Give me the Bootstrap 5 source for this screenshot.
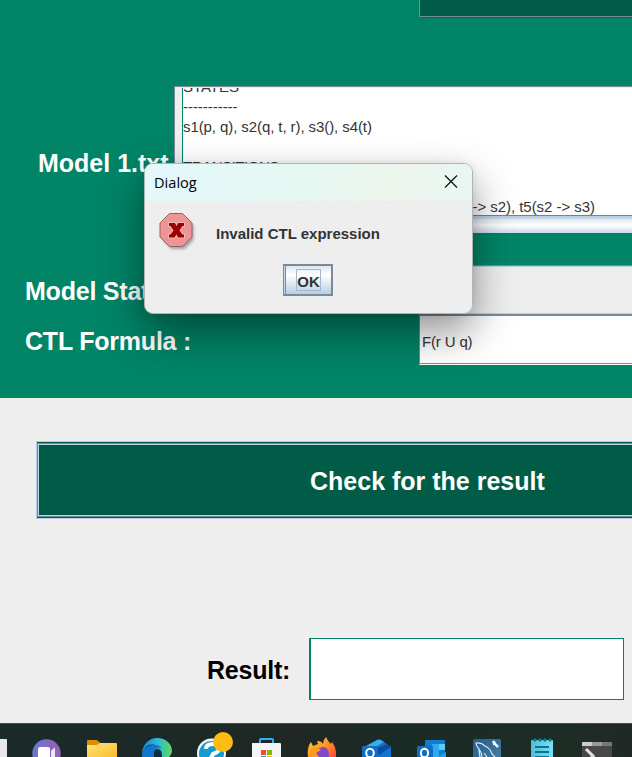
<!DOCTYPE html>
<html lang="en">
<head>
<meta charset="utf-8">
<title>CTL Model Checker</title>
<meta name="viewport" content="width=device-width, initial-scale=1">
<link href="https://cdn.jsdelivr.net/npm/bootstrap@5.3.0/dist/css/bootstrap.min.css" rel="stylesheet">
<style>
body{font-family:"Liberation Sans",Arial,sans-serif;background:#eee;width:632px;height:757px;color:#333}
.form-panel{background:#008466;height:398px}
.top-button{height:18px;margin-left:419px;background:#005c46;border-left:1px solid #7a8a99;border-bottom:1px solid #1d5a50;box-shadow:inset 0 -1px #7a8a99}
.field-label{font-size:25px;font-weight:700;color:#fff;line-height:30px;white-space:nowrap}
.model-row{height:147px;margin-top:68px}
.model-name{width:174px;padding-left:38px;padding-top:6px}
.model-view{border-top:1px solid #7a8a99;border-left:1px solid #7a8a99;background:#eee;padding:1px 0 0 7px}
.model-text{height:127px;background:#fff;border-left:1px solid #008466;font-size:15px;line-height:20px;color:#333;overflow:hidden;white-space:nowrap}
.model-lines{margin-top:-11px;letter-spacing:-.04px}
.line-states{letter-spacing:-.085px}
.line-heading{letter-spacing:-.45px}
.scroll-track{height:18px;margin-left:-7px;border-top:1px solid #6382bf;background:linear-gradient(#b8cfe5 0 2px,#dce5ee 3px,#fff 9px,#cbdbea 17px)}
.state-row{height:51px;margin-top:32px}
.caption-col{width:419px;padding-left:25px;letter-spacing:-.22px}
.state-combo{background:#eee;border-top:1px solid #7a8a99;border-bottom:2px solid #7a8a99;box-shadow:inset 0 1px #b8cfe5,inset 0 -1px #b8cfe5}
.formula-row{height:49px}
.formula-input{background:#fff;border-left:1px solid #7a8a99;border-bottom:1px solid #fff;box-shadow:inset 0 -1px #7a8a99;font-size:15px;letter-spacing:-.15px;padding:5px 0 0 2px}
.check-button{margin:43px 0 0 36px;height:78px;padding:0;background:#005c46;border:1px solid #b8cfe5;border-right:0;border-radius:0;color:#fff;font-size:25px;font-weight:700;text-align:left}
.check-inner{height:74px;border:1px solid #7a8a99;border-right:0;width:100%;box-shadow:inset 1px 1px #b8cfe5,inset 0 -1px #b8cfe5;padding:3px 0 0 272px}
.result-row{margin-top:119px;height:63px;padding-left:207px}
.result-label{width:102px;color:#000;padding-top:1px;letter-spacing:-.22px}
.result-field{width:315px;height:62px;background:#fff;border:1px solid #008466;border-left-width:2px;border-radius:0}
.task-strip{margin-top:22px;height:34px;background:linear-gradient(90deg,#192b29,#202724 47%,#192c25 65%,#1e2c26 90%,#202925);border-top:1px solid #465049;overflow:hidden}
.task-strip svg{display:block}
.message-box{position:absolute;left:144px;top:163px;width:329px;height:151px;background:#eee;border:1px solid #aeb5b2;border-radius:9px;overflow:hidden}
.box-shade{position:absolute;left:144px;top:163px;width:329px;height:151px;border-radius:9px;box-shadow:0 18px 42px rgba(0,0,0,.43),0 0 8px rgba(0,0,0,.08)}
.title-strip{height:37px;background:linear-gradient(115deg,#e3f8fb,#e6f8f2 50%,#edf5ec 75%,#e8f6f3);padding:0 14px 0 9px;color:#000;font:14.6px "Open Sans","Noto Sans",sans-serif}
.title-text{margin-top:-2px}
.message-text{font-size:15px;font-weight:700;color:#333;margin:7px 0 0 19px;white-space:nowrap}
.message-line{height:59px;padding-left:12px}
.ok-button{width:50px;height:32px;margin-right:1px;padding:0 0 0 2px;border:2px solid #7a8a99;border-left-width:1px;border-radius:0;box-shadow:inset 1px 0 #c5d7e6,inset 2px 0 #7a8a99;background:linear-gradient(#dce7f1,#fff 32%,#b8cfe5);font-size:15px;font-weight:700;color:#333}
.ok-focus{display:block;width:25px;height:22px;border:1px solid #a3b8cc;line-height:24px}
</style>
</head>
<body class="m-0 overflow-hidden position-relative">
<main>
<section class="form-panel overflow-hidden">
  <div class="top-button"></div>
  <div class="model-row d-flex">
    <div class="model-name field-label d-flex align-items-center flex-shrink-0">Model 1.txt</div>
    <div class="model-view flex-grow-1 overflow-hidden">
      <div class="model-text">
        <div class="model-lines d-flex flex-column">
          <div>STATES</div>
          <div>-----------</div>
          <div class="line-states">s1(p, q), s2(q, t, r), s3(), s4(t)</div>
          <div>&nbsp;</div>
          <div class="line-heading">TRANSITIONS</div>
          <div>----------------</div>
          <div>t1(s1 -&gt; s2), t2(s1 -&gt; s3), t3(s3 -&gt; s4), t4(s4 -&gt; s2), t5(s2 -&gt; s3)</div>
        </div>
      </div>
      <div class="scroll-track"></div>
    </div>
  </div>
  <div class="state-row d-flex">
    <div class="caption-col field-label d-flex align-items-center flex-shrink-0">Model States :</div>
    <div class="state-combo flex-grow-1"></div>
  </div>
  <div class="formula-row d-flex">
    <div class="caption-col field-label d-flex align-items-center flex-shrink-0">CTL Formula :</div>
    <div class="formula-input flex-grow-1 d-flex align-items-center">F(r U q)</div>
  </div>
</section>
<section class="d-flex flex-column">
  <button class="check-button btn d-flex align-items-center"><span class="check-inner d-flex align-items-center">Check for the result</span></button>
  <div class="result-row d-flex">
    <label class="result-label field-label d-flex align-items-center" for="result">Result:</label>
    <input id="result" class="result-field" type="text" readonly>
  </div>
</section>
</main>
<footer class="task-strip">
<svg width="632" height="33" viewBox="0 724 632 33">
  <defs>
    <linearGradient id="chat" x2="1"><stop stop-color="#6878ce"/><stop offset="1" stop-color="#9860b8"/></linearGradient>
    <linearGradient id="folder" x2="1" y2="1"><stop stop-color="#ffe27b"/><stop offset="1" stop-color="#f9bd2c"/></linearGradient>
    <linearGradient id="edge" x2="1"><stop stop-color="#1682d9"/><stop offset=".5" stop-color="#27b9df"/><stop offset="1" stop-color="#62d957"/></linearGradient>
    <linearGradient id="fox" y2="1"><stop stop-color="#ffdc3b"/><stop offset=".5" stop-color="#ff9822"/><stop offset="1" stop-color="#ff4540"/></linearGradient>
    <linearGradient id="db" y2="1"><stop stop-color="#245d87"/><stop offset="1" stop-color="#477fa9"/></linearGradient>
    <linearGradient id="note" x2="1"><stop stop-color="#55bdd8"/><stop offset="1" stop-color="#76e0f5"/></linearGradient>
  </defs>
  <path fill="#e9e9e9" d="M0 739h6q1 0 1 1v18H0z"/>
  <circle cx="46.500" cy="753.500" r="14.200" fill="url(#chat)"/>
  <rect x="38" y="747" width="12" height="14" rx="2" fill="#fff"/><path fill="#eee8ff" d="M51 751l3-3q1-1 1 1v9h-4z"/>
  <path fill="#d99000" d="M87 741q0-1 1-1h8q2 0 3 2l2 1h5v6H87z"/>
  <path fill="url(#folder)" d="M87 745h9q2 0 4-2h16q1 0 1 1v14H87z"/>
  <path fill="url(#edge)" d="M142 757c-1-11 6-19 15-19 9 0 15 6 15 13q0 4-4 7h-8l-5-13c-7-2-11 2-13 12z"/>
  <path fill="#1277cb" d="M142 757q2-11 9-12 7-1 11 3-7-1-8 5v4z"/><path fill="#112d42" d="M154 757q-1-7 4-8 4 0 4 8z"/>
  <circle cx="211.500" cy="753" r="14.500" fill="#eef7fa"/><circle cx="211.500" cy="753.500" r="12.500" fill="#139bd3"/>
  <path fill="none" stroke="#fff" stroke-width="4" d="M206 749q0-5 7-5 7 0 6 5 0 3-6 5l-2 4"/>
  <circle cx="223" cy="742" r="10" fill="#ffbc13"/>
  <path fill="none" stroke="#35aef3" stroke-width="2" d="M260 744v-4q0-1 1-1h11q1 0 1 1v4"/>
  <path fill="#f5f5f5" d="M252 743h28q1 0 1 1v14h-29z"/>
  <path fill="#f35023" d="M261 750h5v5h-5z"/><path fill="#81bb0a" d="M267 750h5v5h-5z"/><path fill="#159ddd" d="M261 756h5v2h-5z"/><path fill="#febc09" d="M267 756h5v2h-5z"/>
  <path fill="url(#fox)" d="M308 757c-1-7 1-13 3-15l2 4 5-2-1-3q5 0 6 3 0-4 3-7 2 5 5 7l1-2q5 7 4 15z"/>
  <path fill="#8148cc" d="M316 757c0-8 4-10 8-10q5 1 5 10z"/><path fill="#ff9827" d="M311 749q5-3 10 1l-5 3 3 4h-9z"/>
  <path fill="#1174cd" d="M366 747l11-7q2-1 4 0l10 7v11h-25z"/><path fill="#37aef0" d="M366 746l11-6q2-1 4 0l3 2-14 8z"/><path fill="#0c4ca4" d="M375 749l12-5 4 3-12 8z"/>
  <rect x="362" y="746" width="16" height="15" rx="1" fill="#126dc4"/><ellipse cx="370" cy="753" rx="3.800" ry="4.300" fill="none" stroke="#fff" stroke-width="2"/>
  <path fill="#137bd0" d="M425 741q0-1 1-1h18q1 0 1 1v17h-20z"/><path fill="#31aaf0" d="M432 744h7v13h-7z"/><path fill="#56cdf7" d="M439 744h6v6h-6z"/><path fill="#239de6" d="M437 757l9-5v5z"/>
  <rect x="417" y="746" width="16" height="15" rx="1" fill="#126dc4"/><ellipse cx="424.500" cy="753" rx="3.600" ry="4.300" fill="none" stroke="#fff" stroke-width="2"/>
  <rect x="473" y="739" width="28" height="25" rx="1.500" fill="url(#db)"/>
  <path fill="none" stroke="#d9e9f2" stroke-width="1.200" d="M480 757q-1-5-1-8-3-3-3-6 5-1 9 3 5 2 7 8l3 3M479 749q3 4 3 8m2-4 3 4"/><path fill="none" stroke="#edf5f8" stroke-width="2.500" d="M493 741l2 3 3 3m-5-3 3-1"/>
  <rect x="531" y="740" width="22" height="20" rx="1" fill="url(#note)"/>
  <path fill="none" stroke="#087593" stroke-width="2" d="M535 747h14m-14 5h14m-14 5h14"/>
  <g fill="#14758f"><circle cx="535" cy="740" r="1.700"/><circle cx="540" cy="740" r="1.700"/><circle cx="545" cy="740" r="1.700"/><circle cx="550" cy="740" r="1.700"/></g>
  <path fill="#484848" d="M582 743h30v15h-30z"/><path fill="#ccc" d="M582 743q0-1 1-1h9v4h-10z"/><path fill="#999" d="M592 742h10v4h-10z"/><path fill="#777" d="M602 742h9q1 0 1 1v3h-10z"/>
  <path fill="none" stroke="#e2e2e2" stroke-width="3" d="M586 749l7 7-2 2"/>
</svg>
</footer>
<div class="box-shade"></div>
<div class="message-box" role="dialog" aria-label="Dialog">
  <div class="title-strip d-flex align-items-center justify-content-between">
    <span class="title-text">Dialog</span>
    <svg width="14" height="14" viewBox="0 0 14 14" class="mb-1"><path d="M1 1.500l12 12M13 1.500l-12 12" stroke="#111" stroke-width="1.200"/></svg>
  </div>
  <div class="message-line d-flex align-items-center">
    <svg width="40" height="42" viewBox="157 210 40 42" class="flex-shrink-0">
      <defs><filter id="soft"><feGaussianBlur stdDeviation="1.500"/></filter></defs>
      <path d="M171 216h13l8 8v14l-9 9h-13l-8-8v-14z" fill="#777" opacity=".65" filter="url(#soft)" transform="translate(1.500 2)"/>
      <path d="M169.500 213.500h13l9.500 9.500v14l-9.500 9.500h-13l-9.500-9.500v-14z" fill="#ef9494" stroke="#98605f"/>
      <path d="M169 223h6l1.500 3 1.500-3h6v3h-1.500l-3 4.500 3 4h1.500v3h-6l-1.500-3-2 3h-5.500v-3h1.500l3-4-3-4.500H169z" fill="#900" stroke="#fac4c4" stroke-width="1.500" paint-order="stroke"/>
    </svg>
    <span class="message-text">Invalid CTL expression</span>
  </div>
  <div class="d-flex justify-content-center pt-1"><button class="ok-button btn d-flex align-items-center justify-content-center"><span class="ok-focus">OK</span></button></div>
</div>
<script src="https://cdn.jsdelivr.net/npm/bootstrap@5.3.0/dist/js/bootstrap.bundle.min.js"></script>
</body>
</html>
